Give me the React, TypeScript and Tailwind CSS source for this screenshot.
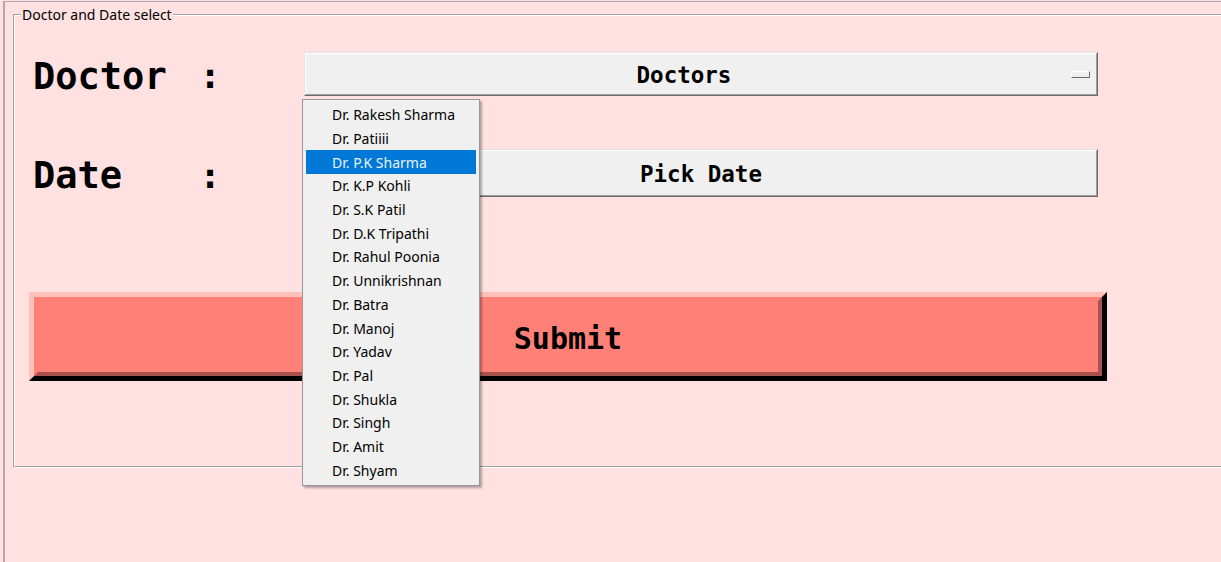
import React from "react";

const doctors = [
  "Dr. Rakesh Sharma",
  "Dr. Patiiii",
  "Dr. P.K Sharma",
  "Dr. K.P Kohli",
  "Dr. S.K Patil",
  "Dr. D.K Tripathi",
  "Dr. Rahul Poonia",
  "Dr. Unnikrishnan",
  "Dr. Batra",
  "Dr. Manoj",
  "Dr. Yadav",
  "Dr. Pal",
  "Dr. Shukla",
  "Dr. Singh",
  "Dr. Amit",
  "Dr. Shyam",
];

const mono = { fontFamily: '"DejaVu Sans Mono", monospace' };
const ui = { fontFamily: '"Noto Sans", sans-serif' };

function RaisedButton({ children, h, className = "" }: { children: React.ReactNode; h: string; className?: string }) {
  return (
    <div className={`w-[794px] ${h} border border-t-[#e3e3e3] border-l-[#e3e3e3] border-b-[#696969] border-r-[#696969] ${className}`}>
      <div className="relative w-full h-full bg-[#f0f0f0] border border-t-white border-l-white border-b-[#a0a0a0] border-r-[#a0a0a0] flex items-center justify-center">
        {children}
      </div>
    </div>
  );
}

export default function App() {
  return (
    <div className="relative w-[1221px] h-[562px] overflow-hidden bg-[#ffe1e1]">
      <div className="ml-[3px] mt-[1px] h-[561px] border-l-2 border-t border-[#b4a8a8]">
        {/* label frame */}
        <div className="relative ml-[8px] mt-[12px] w-[1212px] h-[454px] border-t border-l border-b border-t-[#a0a0a0] border-l-[#a0a0a0] border-b-white">
          <div className="h-full border-t border-l border-b border-t-white border-l-white border-b-[#a0a0a0]">
            <div
              className="absolute left-[7px] top-[-9px] px-[1px] bg-[#ffe1e1] text-[14px] leading-[18px] text-black"
              style={ui}
            >
              Doctor and Date select
            </div>

            {/* Doctor row */}
            <div className="flex items-center mt-[36px] h-[44px]" style={mono}>
              <div className="ml-[18px] w-[166px] text-[37px] font-bold leading-none text-black pt-[4px]">Doctor</div>
              <div className="w-[22px] text-center text-[36px] font-bold leading-none text-black pt-[4px]">:</div>
              <RaisedButton h="h-[44px]" className="ml-[83px]">
                <span className="text-[22.5px] font-bold text-black -ml-[34px] pt-[3px]">Doctors</span>
                <div className="absolute left-[765px] top-[17px] w-[19px] h-[7px] border border-t-white border-l-white border-b-[#696969] border-r-[#696969] bg-[#f0f0f0]" />
              </RaisedButton>
            </div>

            {/* Date row */}
            <div className="flex items-center mt-[53px] h-[48px]" style={mono}>
              <div className="ml-[18px] w-[166px] text-[37px] font-bold leading-none text-black pt-[5px]">Date</div>
              <div className="w-[22px] text-center text-[36px] font-bold leading-none text-black pt-[5px]">:</div>
              <RaisedButton h="h-[48px]" className="ml-[83px]">
                <span className="text-[22.5px] font-bold text-black pt-[3px]">Pick Date</span>
              </RaisedButton>
            </div>

            {/* Submit */}
            <div className="ml-[14px] mt-[95px] w-[1078px] h-[89px] border-[5px] border-t-[#ffbfbb] border-l-[#ffbfbb] border-b-black border-r-black">
              <div className="w-full h-full bg-[#ff8077] border-[4px] border-t-[#ff8077] border-l-[#ff8077] border-b-[#a8524d] border-r-[#a8524d] flex items-center justify-center">
                <span className="text-[30px] font-bold text-black pt-[3px]" style={mono}>Submit</span>
              </div>
            </div>
          </div>
        </div>
      </div>

      {/* dropdown menu */}
      <div
        className="absolute left-[302px] top-[99px] w-[178px] bg-[#f0f0f0] border border-[#979797] px-[3px] py-[3px] shadow-[2px_2px_2px_rgba(0,0,0,0.3)]"
        style={ui}
      >
        {doctors.map((d, i) => (
          <div
            key={d}
            className={`h-[23.7px] flex items-center pl-[26px] text-[14px] ${i === 2 ? "bg-[#0078d7] text-[#eaf3fb]" : "text-black"}`}
          >
            {d}
          </div>
        ))}
      </div>
    </div>
  );
}
